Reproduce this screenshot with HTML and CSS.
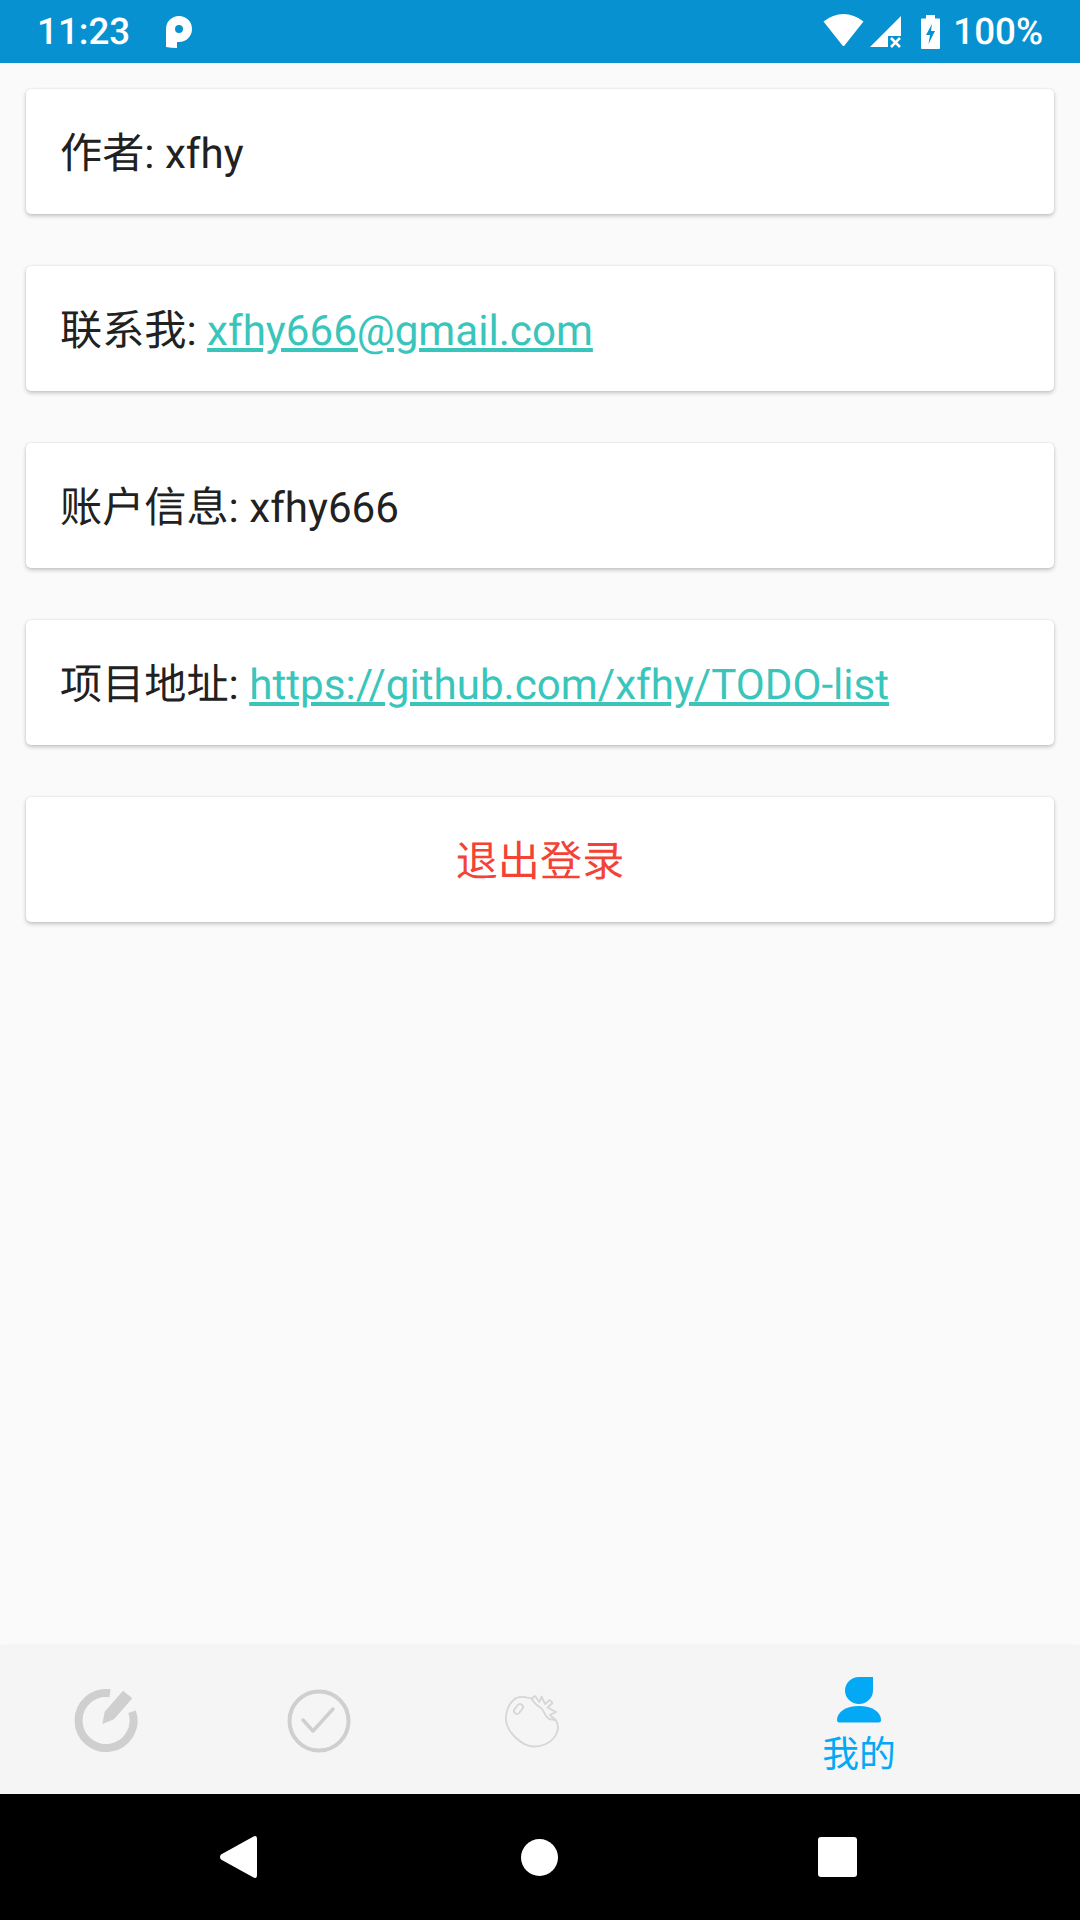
FILE: index.html

```html
<!DOCTYPE html>
<html lang="zh-CN">
<head>
  <meta charset="UTF-8" />
  <meta name="viewport" content="width=device-width, initial-scale=1.0"/>
  <title>我的</title>
  <link rel="stylesheet" href="styles.css">
</head>
<body>
  <div class="app">

    <!-- Status bar -->
    <header class="status-bar">
      <span class="status-time">11:23</span>
      <svg class="icon-p" width="26" height="32" viewBox="0 0 26 32">
        <path fill="#fff" fill-rule="evenodd" d="M0 13A13 13 0 1 1 13 26H11V32Q5 32 0 31ZM13 9A4 4 0 1 0 13 17A4 4 0 1 0 13 9Z"/>
      </svg>
      <div class="status-right">
        <svg class="icon-wifi" width="42" height="33" viewBox="0 0 42 33">
          <path fill="#fff" d="M0.5 7.5Q10 0 20.5 0T40.5 7.5L21.5 31.5Q20.5 32.5 19.5 31.5Z"/>
        </svg>
        <svg class="icon-signal" width="32" height="32" viewBox="0 0 32 32">
          <path fill="#fff" d="M31 0V20H18V31H0Z"/>
          <path fill="none" stroke="#fff" stroke-width="2.5" d="M21 22L30 31M30 22L21 31"/>
        </svg>
        <svg class="icon-battery" width="19" height="34" viewBox="0 0 19 34">
          <path fill="#fff" fill-rule="evenodd" d="M5 0H14V3.5H18Q19 3.5 19 4.5V33Q19 34 18 34H1Q0 34 0 33V4.5Q0 3.5 1 3.5H5ZM11 9L5 20H9L7.5 29L14 16H10Z"/>
        </svg>
        <span class="status-battery">100%</span>
      </div>
    </header>

    <!-- Cards -->
    <main class="content">
      <div class="card"><p>作者: xfhy</p></div>
      <div class="card"><p>联系我: <a class="link" href="#">xfhy666@gmail.com</a></p></div>
      <div class="card"><p>账户信息: xfhy666</p></div>
      <div class="card"><p>项目地址: <a class="link" href="#">https://github.com/xfhy/TODO-list</a></p></div>
      <div class="card card-logout"><p>退出登录</p></div>
    </main>

    <!-- Bottom navigation -->
    <nav class="bottom-nav">
      <div class="nav-item">
        <svg width="64" height="64" viewBox="0 0 64 64">
          <path fill="none" stroke="#cfcfcf" stroke-width="8" d="M36 4.3A27.5 27.5 0 1 0 58.1 22.7"/>
          <path fill="#cfcfcf" d="M28.3 35L30.7 22.7L49 1.7L58.3 9.3L40 30.3Z"/>
        </svg>
      </div>
      <div class="nav-item">
        <svg width="64" height="64" viewBox="0 0 64 64">
          <circle cx="32" cy="32" r="29.5" fill="none" stroke="#cfcfcf" stroke-width="4"/>
          <path fill="none" stroke="#cfcfcf" stroke-width="3.5" stroke-linecap="round" stroke-linejoin="round" d="M16 31L26 42L46 20"/>
        </svg>
      </div>
      <div class="nav-item">
        <svg width="54" height="54" viewBox="0 0 54 54">
          <g fill="none" stroke="#d6d6d6" stroke-width="1.8" stroke-linejoin="round" stroke-linecap="round">
            <path d="M26.5 4.5C20 2.5 13 2 9 5.5C3 10.5 0.5 19 1 26C1.500 33 5 38 9.500 42.500C15 48 21 52.500 28.500 52.500C38 52.500 48 48 51.500 39.500C53.500 35 53.500 30 50.500 26"/>
            <path d="M26.500 4.500L30 2L34.500 8L36.500 2.500L40 10L45 6L47.500 9L42.500 13.500L51 18L45 21L50.500 26"/>
            <path d="M26.500 4.500C29 9 31 11 36 14C40 17 39 22 44 25L50.500 26"/>
            <rect x="10.500" y="9.500" width="6" height="11" rx="3" transform="rotate(38 13.500 15)"/>
          </g>
        </svg>
      </div>
      <div class="nav-item nav-item-active">
        <svg width="44" height="46" viewBox="0 0 44 46">
          <path fill="#03a9f4" d="M22 0H36V13.500A14 13.500 0 1 1 22 0Z"/>
          <path fill="#03a9f4" d="M0 43C0 35 9 29 22 29S44 35 44 43Q44 45.500 41.500 45.500H2.500Q0 45.500 0 43Z"/>
        </svg>
        <span class="nav-label">我的</span>
      </div>
    </nav>

    <!-- Android navigation -->
    <footer class="system-nav">
      <svg class="back-btn" width="37" height="42" viewBox="0 0 37 42">
        <path fill="#fff" d="M33.500 0.500Q37 -1 37 3V39Q37 43 33.500 41.500L1 23.500Q-1 21 1 18.500Z"/>
      </svg>
      <span class="home-btn"></span>
      <span class="recent-btn"></span>
    </footer>
  </div>
</body>
</html>
```

FILE: styles.css

```css
* {
  box-sizing: border-box;
  margin: 0;
  padding: 0;
}

body {
  font-family: Roboto, "Noto Sans CJK SC", sans-serif;
  background-color: #fafafa;
  text-rendering: geometricPrecision;
}

.app {
  width: 1080px;
  height: 1920px;
  display: flex;
  flex-direction: column;
}

/* Status bar */
.status-bar {
  height: 63px;
  flex: none;
  background-color: #0891d1;
  color: #fff;
  display: flex;
  align-items: center;
  padding: 0 37px;
  font-size: 36.75px;
  font-weight: 500;
}

.icon-p {
  margin-left: 36px;
}

.status-right {
  margin-left: auto;
  display: flex;
  align-items: center;
}

.icon-wifi {
  margin-bottom: 2px;
}

.icon-signal {
  margin-left: 5px;
}

.icon-battery {
  margin-left: 19px;
}

.status-battery {
  margin-left: 13px;
}

/* Cards */
.content {
  flex: 1;
  padding: 26px 26px 0;
  display: flex;
  flex-direction: column;
  gap: 52px;
}

.card {
  height: 125px;
  flex: none;
  background-color: #fff;
  border-radius: 5px;
  box-shadow: 0 2px 4px rgba(0, 0, 0, 0.22), 0 0 2px rgba(0, 0, 0, 0.1);
  display: flex;
  align-items: center;
  padding: 0 34px 2px;
  font-size: 42.15px;
  color: #212121;
  white-space: pre;
}

.link {
  color: #39c5bb;
  text-decoration: underline;
}

.card-logout {
  justify-content: center;
  color: #f44336;
}

/* Bottom navigation */
.bottom-nav {
  height: 147px;
  flex: none;
  background-color: #f5f5f5;
  box-shadow: 0 -1px 4px rgba(0, 0, 0, 0.05);
  display: flex;
}

.nav-item {
  width: 212.75px;
  display: flex;
  flex-direction: column;
  align-items: center;
  justify-content: center;
}

.nav-item-active {
  flex: 1;
  justify-content: flex-start;
  padding-top: 30px;
}

.nav-label {
  margin-top: 7px;
  font-size: 36.75px;
  line-height: 50px;
  color: #03a9f4;
}

/* Android navigation */
.system-nav {
  height: 126px;
  flex: none;
  background-color: #000;
  display: flex;
  align-items: center;
  padding-left: 220px;
}

.home-btn {
  width: 37px;
  height: 37px;
  margin-left: 264px;
  border-radius: 50%;
  background-color: #fff;
}

.recent-btn {
  width: 39px;
  height: 40px;
  margin-left: 260px;
  border-radius: 3px;
  background-color: #fff;
}
```
